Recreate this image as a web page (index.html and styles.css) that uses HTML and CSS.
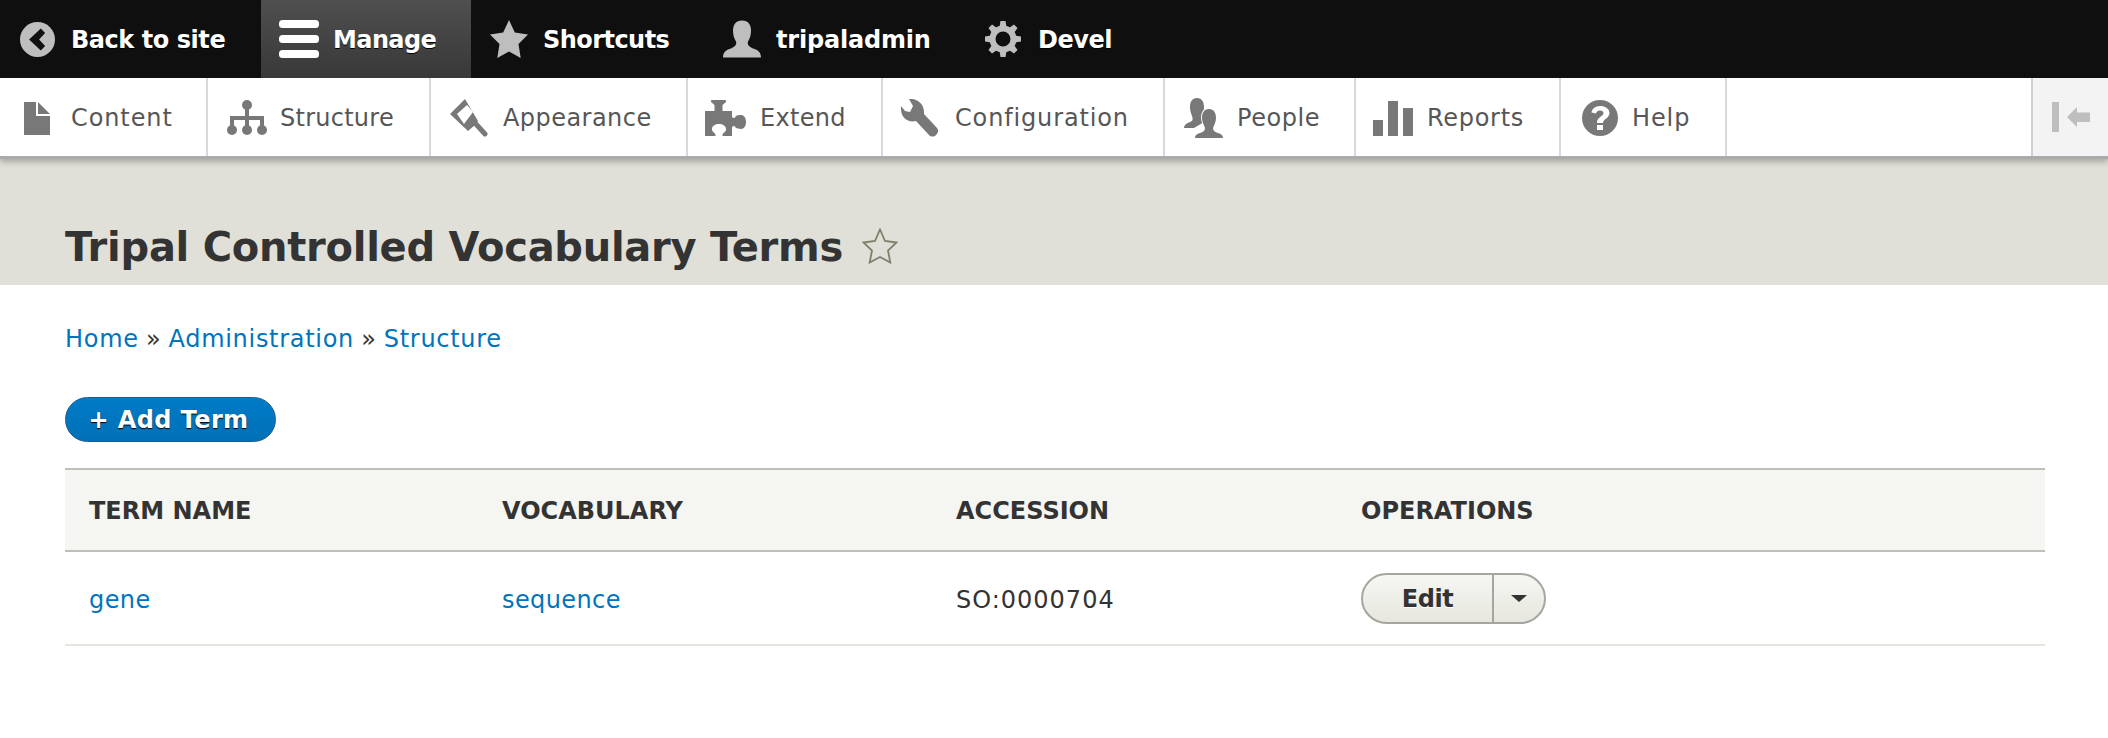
FILE: index.html
```html
<!DOCTYPE html>
<html lang="en">
<head>
<meta charset="utf-8">
<title>Tripal Controlled Vocabulary Terms</title>
<link rel="stylesheet" href="styles.css">
</head>
<body>
<nav class="toolbar">
  <a class="bar-item back"><svg class="bar-icon w35" viewBox="0 0 35 35"><circle cx="17.500" cy="17.500" r="17.500" fill="#bebebe"/><path d="M9.100 17.500L20.800 6.500l4.300 4.400-6 6.600 6 6.600-4.300 4.400z" fill="#111"/></svg><span>Back to site</span></a>
  <a class="bar-item manage"><svg class="bar-icon w40" viewBox="0 0 40 38"><rect width="40" height="8" rx="3.500" fill="#fff"/><rect y="15" width="40" height="8" rx="3.500" fill="#fff"/><rect y="30" width="40" height="8" rx="3.500" fill="#fff"/></svg><span>Manage</span></a>
  <a class="bar-item shortcuts"><svg class="bar-icon w38" viewBox="0 0 38 38"><path d="M19 0l5.800 12.500L38 14.500l-9.500 9.600L30.700 38 19 31.500 7.300 38l2.200-13.900L0 14.500l13.200-2z" fill="#bebebe"/></svg><span>Shortcuts</span></a>
  <a class="bar-item user"><svg class="bar-icon w38" viewBox="8 9 38 37"><path d="M27 9c6 0 9 4 9 10 0 4-1 8-3 11-1 3 1 5 5 7 4 1 8 3 8 9H8c0-6 4-8 8-9 4-2 6-4 5-7-2-3-3-7-3-11 0-6 3-10 9-10z" fill="#bebebe"/></svg><span>tripaladmin</span></a>
  <a class="bar-item devel"><svg class="bar-icon w36" viewBox="-18 -19 36 38"><g fill="#bebebe"><circle r="10.500" fill="none" stroke="#bebebe" stroke-width="6"/><path d="M-3.500-12L-2.500-18H2.500L3.500-12z"/><path d="M-3.500-12L-2.500-18H2.500L3.500-12z" transform="rotate(45)"/><path d="M-3.500-12L-2.500-18H2.500L3.500-12z" transform="rotate(90)"/><path d="M-3.500-12L-2.500-18H2.500L3.500-12z" transform="rotate(135)"/><path d="M-3.500-12L-2.500-18H2.500L3.500-12z" transform="rotate(180)"/><path d="M-3.500-12L-2.500-18H2.500L3.500-12z" transform="rotate(225)"/><path d="M-3.500-12L-2.500-18H2.500L3.500-12z" transform="rotate(270)"/><path d="M-3.500-12L-2.500-18H2.500L3.500-12z" transform="rotate(315)"/></g></svg><span>Devel</span></a>
</nav>
<nav class="tray">
  <a class="tray-item i-content"><svg class="tray-icon" width="26" height="33" viewBox="0 0 26 33"><path d="M0 0h12v14h14v19H0zM14 0l12 12H14z" fill="#787878"/></svg><span>Content</span></a>
  <a class="tray-item i-structure"><svg class="tray-icon" width="40" height="36" viewBox="0 0 40 36"><g fill="#787878"><circle cx="20" cy="5" r="5"/><circle cx="5" cy="30" r="5"/><circle cx="20" cy="30" r="5"/><circle cx="35" cy="30" r="5"/><path d="M18 8h4v8h15v12h-4v-8H22v8h-4v-8H7v8H3V16h15z"/></g></svg><span>Structure</span></a>
  <a class="tray-item i-appearance"><svg class="tray-icon" width="38" height="38" viewBox="9 6 38 38"><path fill-rule="evenodd" d="M24 6L9 21l18 17 7-6 3-4zM26 12l6 7-9 12-7-10z" fill="#787878"/><path d="M34 30l10 11" stroke="#787878" stroke-width="5" stroke-linecap="round"/></svg><span>Appearance</span></a>
  <a class="tray-item i-extend"><svg class="tray-icon" width="41" height="36" viewBox="10 6 41 36"><path d="M17 6h13c1 0 1.500 1 1 2l-3.500 3v6H37v6c2 2 3 1 4-1 1-1 3-1 5-1 3 0 5 3 5 7s-2 7-5 7c-2 0-4-1-5-1-1-2-2-3-4-1v9h-9c-1-1-1-1 0-2 1-2 3-2 3-5 0-3-3-5-7-5s-7 2-7 5c0 3 2 3 3 5 1 1 1 1 0 2H10V17h9.500v-6L16 8c-.5-1 0-2 1-2z" fill="#787878"/></svg><span>Extend</span></a>
  <a class="tray-item i-config"><svg class="tray-icon" width="39" height="38" viewBox="9 7 39 38"><path d="M18 7c8-1 15 5 15 13v2l13 14c2 3 1 5-1 7s-5 2-7 0L25 29c-8 2-16-3-15-15l4 5 5 1 3-6z" fill="#787878"/></svg><span>Configuration</span></a>
  <a class="tray-item i-people"><svg class="tray-icon" width="40" height="40" viewBox="7 7 40 40"><g fill="#787878"><path d="M21 7c5 0 7 4 7 9 0 4-1 7-2 10 0 3 1 4 2 5l-10 6H8c0-3 3-5 6-6 3-1 3-3 2-6-1-3-2-5-2-9 0-5 2-9 7-9z"/><path d="M33 18c5 0 7 4 7 9 0 4-2 7-3 10 0 3 2 4 5 5 3 1 5 2 5 5H19c0-3 2-4 5-5 3-1 5-2 5-5-1-3-3-6-3-10 0-5 2-9 7-9z" stroke="#fff" stroke-width="2" paint-order="stroke"/></g></svg><span>People</span></a>
  <a class="tray-item i-reports"><svg class="tray-icon" width="40" height="35" viewBox="0 0 40 35"><g fill="#787878"><rect y="19" width="10" height="16"/><rect x="15" width="10" height="35"/><rect x="30" y="7" width="10" height="28"/></g></svg><span>Reports</span></a>
  <a class="tray-item i-help"><svg class="tray-icon" width="36" height="36" viewBox="0 0 36 36"><path fill-rule="evenodd" d="M18 0a18 18 0 1 1 0 36 18 18 0 0 1 0-36zM15 25v5h6v-5zM18 6c-5 0-8 3-8.500 6.500l4.500 1c.5-2 2-3 4-3s3.500 1 3.500 2.500c0 3.500-6.500 3.500-6.500 10h6c0-4 6.500-4.500 6.500-10.500C27 8.500 23 6 18 6z" fill="#787878"/></svg><span>Help</span></a>
  <a class="tray-toggle"><svg width="38" height="30" viewBox="0 0 38 30"><g fill="#bebebe"><rect width="7" height="30"/><path d="M15 15l10-10v5.500h13v9.500H25v5z"/></g></svg></a>
</nav>
<header class="page-head">
  <h1>Tripal Controlled Vocabulary Terms</h1>
  <svg class="fav" width="36" height="36" viewBox="0 0 36 36"><path d="M18 1.500l5 11.500 11.500 1.500-8.500 8 2.300 12L18 29l-10.300 5.500L10 22.500l-8.500-8L13 13z" fill="none" stroke="#7f7f6c" stroke-width="1.800"/></svg>
</header>
<main class="content">
  <div class="crumbs"><a>Home</a> » <a>Administration</a> » <a>Structure</a></div>
  <a class="add-btn">+ Add Term</a>
  <table class="terms">
    <thead>
      <tr><th class="c1">TERM NAME</th><th class="c2">VOCABULARY</th><th class="c3">ACCESSION</th><th>OPERATIONS</th></tr>
    </thead>
    <tbody>
      <tr>
        <td class="text-cell"><a>gene</a></td><td class="text-cell"><a>sequence</a></td><td class="text-cell accession">SO:0000704</td>
        <td class="ops"><div class="drop"><span class="drop-main">Edit</span><span class="drop-arrow"></span></div></td>
      </tr>
    </tbody>
  </table>
</main>
</body>
</html>
```
FILE: styles.css
```css
* { box-sizing: border-box; }
html, body { margin: 0; padding: 0; }
body { background: #fff; color: #333; font-family: "DejaVu Sans", sans-serif; font-size: 24px; letter-spacing: .55px; height: 738px; overflow: hidden; }
a { color: #0074bd; text-decoration: none; }

.toolbar { display: flex; height: 78px; background: #0f0f0f; align-items: stretch; position: relative; z-index: 2; }
.bar-item { display: flex; align-items: center; color: #fff; font-weight: 700; font-size: 24px; letter-spacing: -.45px; text-shadow: 0 1px 0 #000; }
.bar-item span { padding-top: 2px; }
.bar-icon { flex: none; }
.w35 { width: 35px; height: 35px; }
.w40 { width: 40px; height: 38px; }
.w38 { width: 38px; height: 38px; }
.w36 { width: 36px; height: 38px; }
.back { width: 261px; padding-left: 20px; gap: 16px; }
.manage { width: 210px; padding-left: 18px; gap: 14px; background: linear-gradient(#4f4f4f, #383838); letter-spacing: -.6px; }
.shortcuts { width: 233px; padding-left: 19px; gap: 15px; letter-spacing: -.55px; }
.user { width: 262px; padding-left: 19px; gap: 15px; letter-spacing: -.2px; }
.devel { padding-left: 19px; gap: 17px; }

.tray { display: flex; height: 78px; background: #fff; box-shadow: 0 3px 0 #aaa, 0 6px 6px rgba(0,0,0,.25); position: relative; z-index: 1; padding-top: 2px; }
.tray-item { display: flex; align-items: center; color: #565656; font-size: 24px; border-right: 2px solid #d9d9d9; margin-top: -2px; padding-top: 2px; }
.i-content { width: 208px; padding-left: 24px; gap: 21px; letter-spacing: .9px; }
.i-structure { width: 223px; padding-left: 19px; gap: 13px; letter-spacing: .25px; }
.i-appearance { width: 257px; padding-left: 19px; gap: 15px; letter-spacing: .45px; }
.i-extend { width: 195px; padding-left: 17px; gap: 14px; letter-spacing: .3px; }
.i-config { width: 282px; padding-left: 17px; gap: 16px; letter-spacing: .85px; }
.i-people { width: 191px; padding-left: 18px; gap: 14px; }
.i-reports { width: 205px; padding-left: 17px; gap: 14px; letter-spacing: .7px; }
.i-help { width: 166px; padding-left: 21px; gap: 14px; letter-spacing: .9px; }
.tray-toggle { margin-left: auto; margin-top: -2px; width: 77px; display: flex; align-items: center; justify-content: flex-start; padding-left: 19px; background: #f3f3f3; border-left: 2px solid #d0d0d0; }

.page-head { display: flex; align-items: flex-start; gap: 19px; height: 129px; background: #e0e0d8; padding: 67px 0 0 65px; }
.page-head h1 { margin: 0; font-size: 40px; line-height: 48px; font-weight: 700; letter-spacing: -.27px; color: #333; }
.fav { flex: none; margin-top: 5px; }

.content { padding: 39px 63px 0 65px; }
.crumbs { font-size: 24px; line-height: 30px; letter-spacing: .7px; word-spacing: -1.1px; }
.add-btn { display: inline-block; margin-top: 43px; height: 45px; width: 211px; border-radius: 23px; background: linear-gradient(#007bc6, #0071b8); border: 1px solid #1e5c90; color: #fff; font-weight: 700; font-size: 24px; letter-spacing: .4px; line-height: 45px; padding-right: 4px; text-align: center; text-shadow: 0 1px 1px #000; }
.terms { margin-top: 26px; width: 100%; border-collapse: collapse; table-layout: fixed; }
.terms th { background: #f5f5f2; border-top: 2px solid #bfbfba; border-bottom: 2px solid #bfbfba; height: 82px; padding: 2px 24px 0; text-align: left; font-size: 24px; letter-spacing: 0; font-weight: 700; color: #333; }
.c1 { width: 413px; }
.c2 { width: 454px; }
.c3 { width: 405px; }
.terms td { height: 94px; padding: 0 24px; border-bottom: 2px solid #e6e6e0; font-size: 24px; letter-spacing: .4px; color: #333; }
.terms .text-cell { padding-top: 3px; }
.terms .accession { letter-spacing: 1px; }
.terms .ops { padding-left: 24px; }
.drop { display: flex; width: 185px; height: 51px; border: 2px solid #a6a6a0; border-radius: 26px; background: linear-gradient(#f6f6f3, #e7e7df); }
.drop-main { flex: none; width: 131px; border-right: 2px solid #a6a6a0; text-align: center; font-weight: 700; letter-spacing: -.4px; line-height: 49px; color: #333; text-shadow: 0 1px 0 #fff; }
.drop-arrow { flex: 1; position: relative; }
.drop-arrow::after { content: ""; position: absolute; left: 17px; top: 20px; border-style: solid; border-width: 7px 8px 0; border-color: #333 transparent transparent; }
```
